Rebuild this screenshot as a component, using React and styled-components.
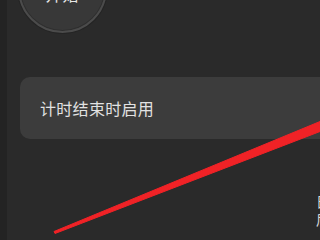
import styled, { createGlobalStyle } from 'styled-components'

const Global = createGlobalStyle`
  html, body {
    margin: 0;
    padding: 0;
    background: #232323;
    overflow: hidden;
  }
`

const Screen = styled.div`
  position: relative;
  width: 320px;
  height: 240px;
  display: grid;
  grid-template-columns: 7px 1fr;
  overflow: hidden;
  font-family: 'Noto Sans CJK SC', 'Noto Sans', sans-serif;
`

const Gutter = styled.div`
  background: #232323;
`

const Panel = styled.div`
  background: #2a2a2a;
  display: flex;
  flex-direction: column;
  padding-left: 13px;
  overflow: hidden;
  position: relative;
`

const DialWrap = styled.div`
  height: 33px;
  position: relative;
`

const Dial = styled.div`
  position: absolute;
  left: -2px;
  top: -56px;
  width: 85px;
  height: 85px;
  border-radius: 50%;
  background: #383838;
  border: 2px solid #4b4b4b;
  box-shadow: 0 0 0 1px #242424, inset 0 0 0 1px #2f2f2f;
  display: flex;
  align-items: flex-end;
  justify-content: center;
`

const DialText = styled.span`
  color: #e8e8e8;
  font-size: 16px;
  line-height: 16px;
  margin-bottom: 29px;
  letter-spacing: 1px;
`

const Card = styled.div`
  margin-top: 44px;
  width: 330px;
  height: 62px;
  border-radius: 10px;
  background: #3c3c3c;
  display: flex;
  align-items: center;
  padding-left: 20px;
  box-sizing: border-box;
  flex-shrink: 0;
`

const Label = styled.span`
  color: #e2e2e2;
  font-size: 16px;
  letter-spacing: 0.3px;
`

const EdgeText = styled.div`
  position: absolute;
  right: -10px;
  top: 192px;
  color: #d8d8d8;
  font-size: 14px;
  line-height: 18px;
  width: 14px;
`

const Stroke = styled.svg`
  position: absolute;
  left: 0;
  top: 0;
  pointer-events: none;
`

export default function App() {
  return (
    <>
      <Global />
      <Screen>
        <Gutter />
        <Panel>
          <DialWrap>
            <Dial>
              <DialText>开始</DialText>
            </Dial>
          </DialWrap>
          <Card>
            <Label>计时结束时启用</Label>
          </Card>
          <EdgeText>日后</EdgeText>
        </Panel>
        <Stroke width="320" height="240" viewBox="0 0 320 240">
          <path
            d="M54 231.5 L320 121.5 L320 131.5 L55 233.5 Z"
            fill="#f02226"
            stroke="#f02226"
            strokeWidth="1"
            strokeLinejoin="round"
          />
        </Stroke>
      </Screen>
    </>
  )
}
